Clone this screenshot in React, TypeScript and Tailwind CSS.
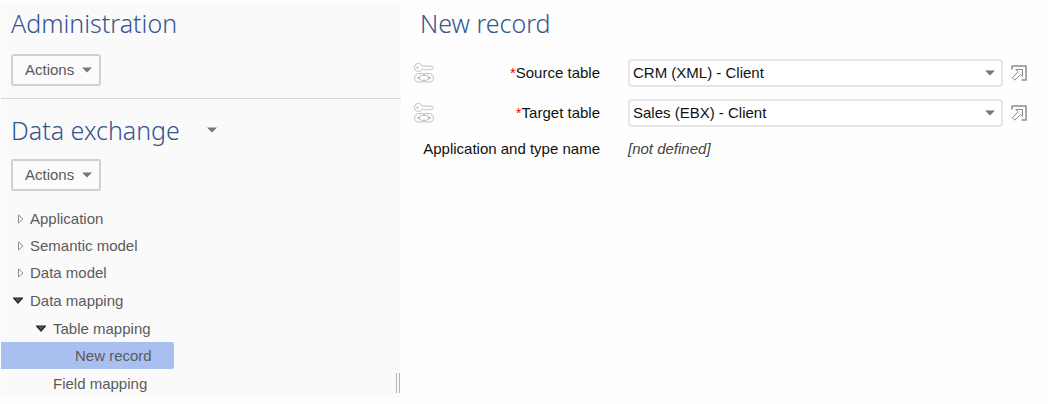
import React from "react";

function Caret({ className = "" }: { className?: string }) {
  return (
    <svg aria-hidden="true" width="10" height="6" viewBox="0 0 10 6" className={className}>
      <path d="M0 0.5h10L5 5.5z" fill="currentColor" />
    </svg>
  );
}

function ActionsButton() {
  return (
    <button
      type="button"
      className="flex h-8 w-[90px] items-center justify-between rounded-[3px] border-2 border-[#d0d0d0] bg-[#fbfbfb] pr-[7px] pl-3 text-[#5a5a5a]"
    >
      Actions
      <Caret className="text-[#777777]" />
    </button>
  );
}

function Marker({ state }: { state: "open" | "closed" }) {
  return state === "open" ? (
    <svg aria-hidden="true" width="10" height="10" viewBox="0 0 10 10" className="shrink-0">
      <path d="M0.5 2h9L5 7z" fill="#555" stroke="#222" strokeWidth="1.2" />
    </svg>
  ) : (
    <svg aria-hidden="true" width="10" height="10" viewBox="0 0 10 10" className="shrink-0">
      <path d="M5.5 1v8L10 5z" fill="#fff" stroke="#8a8a8a" />
    </svg>
  );
}

function KeyLinkIcon() {
  return (
    <svg aria-hidden="true" width="22" height="22" viewBox="0 0 22 22" fill="none" stroke="#bdbdbd">
      <path
        d="M9.2 4.2C8.6 2.4 7.2 1.5 5.3 1.5C3 1.5 1.5 3.2 1.5 5.4S3 9.4 5.3 9.4C7.2 9.4 8.4 8.6 9.2 7.4H10.4L11.6 8.3L12.8 7L14.2 8.3L15.5 7L16.8 8.3L18.1 7H19.4L20.4 5.6L19.4 4.2Z"
        fill="#fefefe"
      />
      <circle cx="4.4" cy="5.4" r="1" fill="#b0b0b0" stroke="none" />
      <rect x="1.5" y="11.5" width="11.5" height="8.6" rx="4.3" />
      <rect x="9" y="11.5" width="11.5" height="8.6" rx="4.3" />
      <rect x="6" y="13.4" width="10" height="4.8" rx="2.4" fill="#fefefe" />
      <path d="M4.4 15.8h2.2M15.4 15.8h2.2" stroke="#aaa" strokeWidth="1.6" />
    </svg>
  );
}

function OpenIcon() {
  return (
    <svg aria-hidden="true" width="16" height="16" viewBox="0 0 16 16" fill="none" stroke="#8d8d8d">
      <path d="M1 4.5V1H15V15H10.5" strokeWidth="1.5" />
      <path d="M4.8 4.5H11.5V11.2L9.7 9.4L3.8 15.2L1.3 12.7L7 6.8Z" fill="#fefefe" />
    </svg>
  );
}

function Heading({ children }: { children: React.ReactNode }) {
  return (
    <h2 className="font-['Noto_Sans','Open_Sans',sans-serif] text-[25px] leading-[30px] font-light whitespace-nowrap text-[#34558f]">
      {children}
    </h2>
  );
}

function TableField({ id, label, value }: { id: string; label: string; value: string }) {
  return (
    <div className="flex h-10 items-center">
      <KeyLinkIcon />
      <label htmlFor={id} className="w-[165px] shrink-0 text-right text-[#111111]">
        <span className="text-[#ff0000]">*</span>
        {label}
      </label>
      <div className="relative ml-7 min-w-0 flex-1">
        <select
          id={id}
          defaultValue={value}
          className="block h-7 w-full appearance-none rounded-[4px] border-2 border-[#e6e6e6] bg-white pr-6 pl-[3px] text-[#111111]"
        >
          <option>{value}</option>
        </select>
        <Caret className="pointer-events-none absolute top-[11px] right-2 text-[#777777]" />
      </div>
      <button type="button" aria-label={`Open ${label}`} className="ml-2">
        <OpenIcon />
      </button>
    </div>
  );
}

const rowClass = "flex h-[27px] items-center gap-[7px]";

export default function App() {
  return (
    <div className="flex min-h-screen bg-[#fefefe] pt-1 pb-1.5 pl-px font-['Liberation_Sans',Arial,sans-serif] text-[15px] leading-5">
      <aside className="flex w-[400px] shrink-0 bg-[#fafafa] text-[#5a5a5a]">
        <div className="min-w-0 flex-1">
          <header className="-mr-2 border-b border-[#d9d9d9] px-2.5 pt-1 pb-3">
            <Heading>Administration</Heading>
            <div className="mt-4">
              <ActionsButton />
            </div>
          </header>
          <section className="px-2.5 pt-4">
            <div className="flex items-center gap-[27px]">
              <Heading>Data exchange</Heading>
              <button type="button" aria-label="Data exchange menu">
                <Caret className="text-[#777777]" />
              </button>
            </div>
            <div className="mt-[14px]">
              <ActionsButton />
            </div>
          </section>
          <nav aria-label="Data exchange" className="mt-[14px]">
            <ul>
              {["Application", "Semantic model", "Data model"].map((name) => (
                <li key={name}>
                  <a href="#" className={`${rowClass} pl-3`}>
                    <Marker state="closed" />
                    {name}
                  </a>
                </li>
              ))}
              <li className="pt-px">
                <a href="#" className={`${rowClass} pl-3`}>
                  <Marker state="open" />
                  Data mapping
                </a>
                <ul className="pt-px">
                  <li>
                    <a href="#" className={`${rowClass} pl-[35px]`}>
                      <Marker state="open" />
                      Table mapping
                    </a>
                    <ul className="pb-px">
                      <li>
                        <a
                          href="#"
                          aria-current="page"
                          className={`${rowClass} w-[173px] rounded-r-[2px] bg-[#a9bff0] pl-[74px]`}
                        >
                          New record
                        </a>
                      </li>
                    </ul>
                  </li>
                  <li>
                    <a href="#" className={`${rowClass} pl-[52px]`}>
                      Field mapping
                    </a>
                  </li>
                </ul>
              </li>
            </ul>
          </nav>
        </div>
        <div className="flex w-2 items-end gap-0.5 pb-[5px] pl-[3px]">
          <span className="h-5 w-px bg-[#b5b5b5]" />
          <span className="h-5 w-px bg-[#b5b5b5]" />
        </div>
      </aside>
      <main className="min-w-0 flex-1 pt-1 pr-[21px] pl-3">
        <div className="pl-[7px]">
          <Heading>New record</Heading>
        </div>
        <form className="mt-[15px]">
          <TableField id="source" label="Source table" value="CRM (XML) - Client" />
          <TableField id="target" label="Target table" value="Sales (EBX) - Client" />
          <div className="flex h-8 items-center">
            <span className="w-[187px] shrink-0 text-right text-[#111111]">Application and type name</span>
            <em className="ml-7 text-[#444444]">[not defined]</em>
          </div>
        </form>
      </main>
    </div>
  );
}
